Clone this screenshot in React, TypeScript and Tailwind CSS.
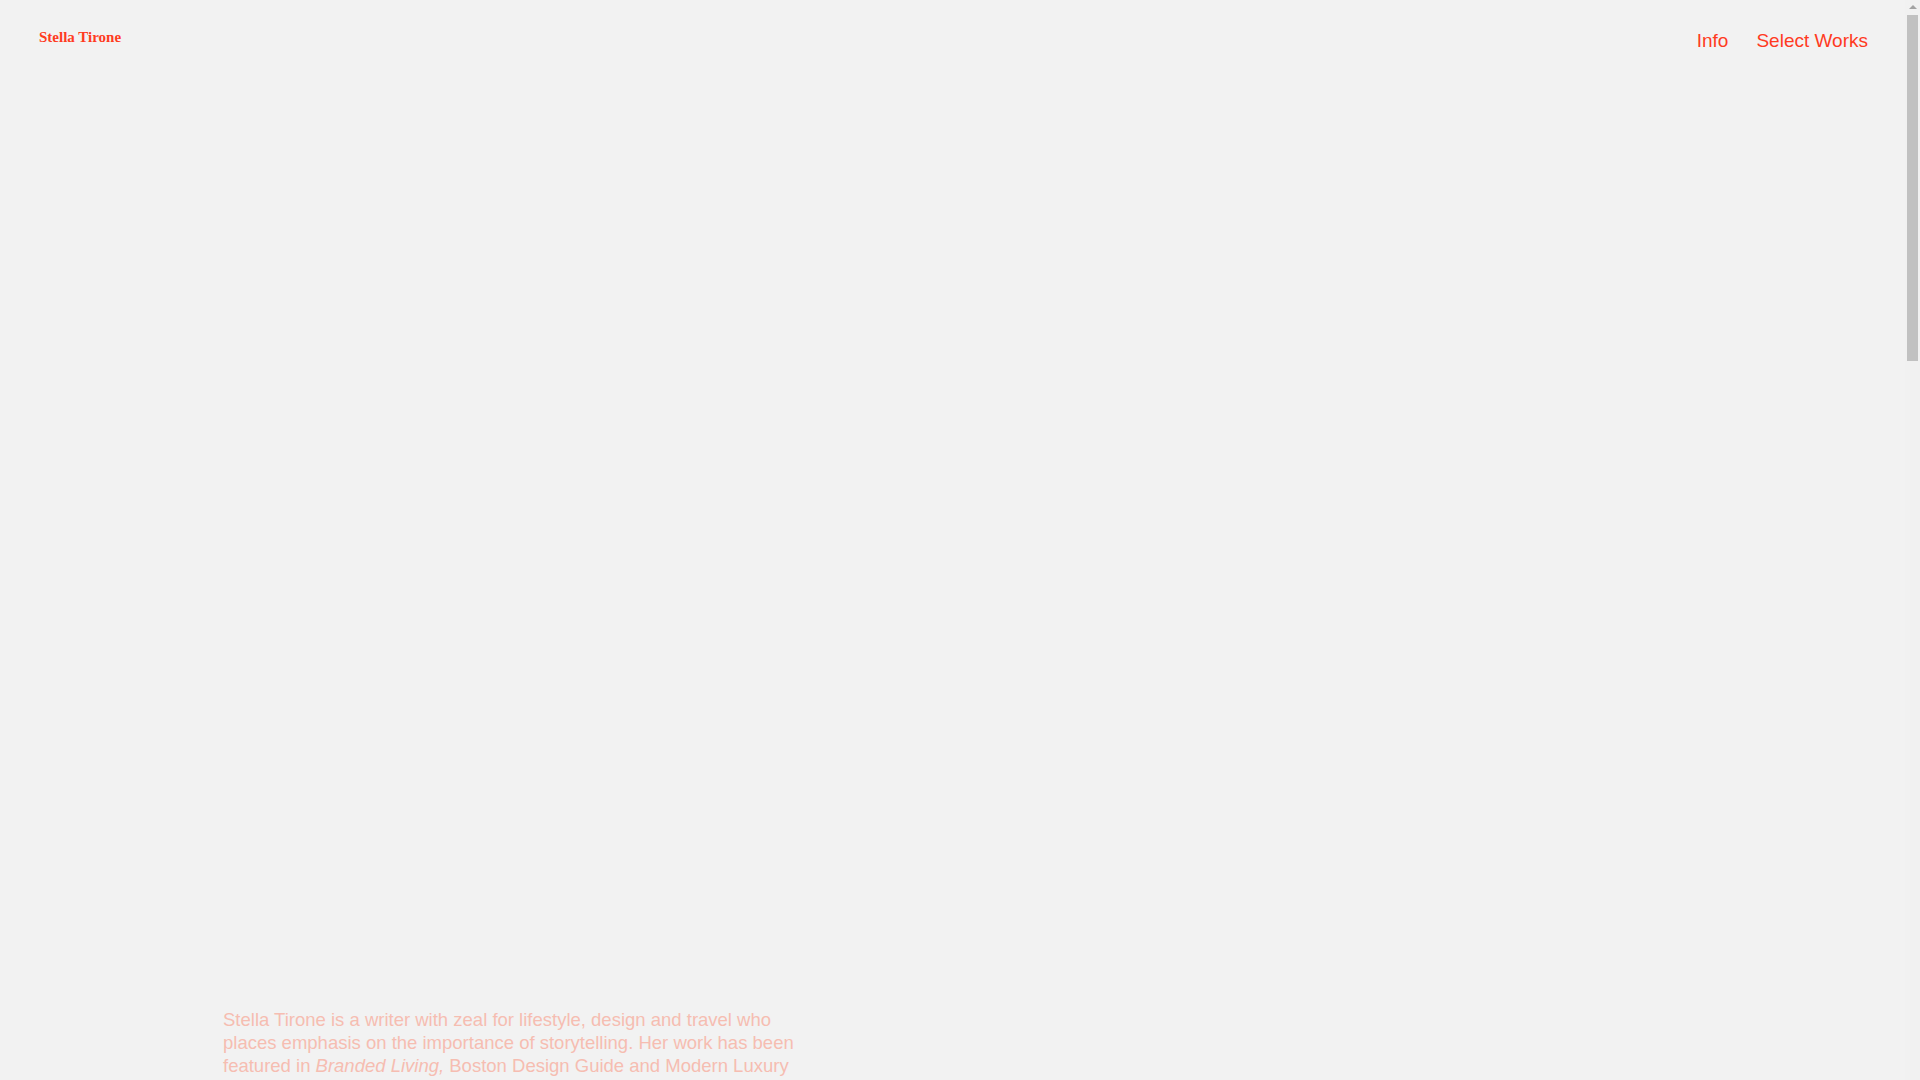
import React from 'react';

const navLinks = ['Info', 'Select Works'];

export default function App() {
  return (
    <div className="min-h-screen bg-[#f2f2f2] text-[#ff3b1f]">
      <header className="flex items-start justify-between pl-[39px] pr-[52px] pt-[29px]">
        <a
          href="#"
          className="text-[15px] font-bold leading-[17px] text-[#ff3b1f] [font-family:'Liberation_Serif',serif]"
        >
          Stella Tirone
        </a>
        <nav className="mt-[1px] flex gap-[28px] text-[19px] leading-[22px] [font-family:'Liberation_Sans',Arial,sans-serif]">
          {navLinks.map((link) => (
            <a key={link} href="#" className="text-[#ff3b1f]">
              {link}
            </a>
          ))}
        </nav>
      </header>

      {/* hero image area (empty) */}
      <div className="h-[956px]" aria-hidden="true" />

      <section className="pb-[2200px] pl-[223px]">
        <p className="w-[578px] text-[18.5px] leading-[23px] text-[#f6bdb1] [font-family:'Liberation_Sans',Arial,sans-serif]">
          Stella Tirone is a writer with zeal for lifestyle, design and travel who places emphasis on
          the importance of storytelling. Her work has been featured in <em>Branded Living,</em>{' '}
          Boston Design Guide and Modern Luxury magazines, among others. She lives and works
          between Boston and New York.
        </p>
      </section>

      {/* browser scrollbar */}
      <div className="fixed right-0 top-0 flex h-screen w-[15px] flex-col items-center bg-[#f1f1f1]" aria-hidden="true">
        <div className="mt-[5px] h-0 w-0 border-x-[4px] border-b-[4px] border-x-transparent border-b-[#a3a3a3]" />
        <div className="mt-[6px] h-[346px] w-[11px] bg-[#c1c1c1]" />
      </div>
    </div>
  );
}
